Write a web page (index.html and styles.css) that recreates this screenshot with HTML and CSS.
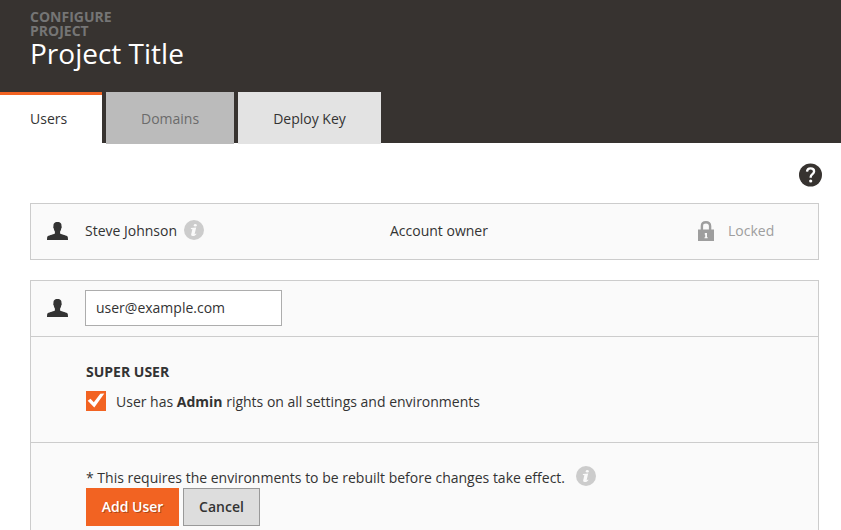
FILE: index.html
```html
<!DOCTYPE html>
<html lang="en">
<head>
<meta charset="utf-8">
<title>Project Title</title>
<link rel="stylesheet" href="styles.css">
</head>
<body>
<svg class="defs" width="0" height="0">
  <symbol id="person" viewBox="0 0 21 18"><path d="M10.500 0C7.300 0 6.300 1.800 6.500 4.300C6 4.700 6.300 6.300 6.800 6.600C7 8 7.400 8.900 7.900 9.600V11.400C6 12.700 1 13 .3 14.800C.1 15.700 0 17.300 0 18H21C21 17.300 20.900 15.700 20.700 14.800C20 13 15 12.700 13.100 11.400V9.600C13.600 8.900 14 8 14.200 6.600C14.700 6.300 15 4.700 14.500 4.300C14.700 1.800 13.700 0 10.500 0Z"/></symbol>
  <symbol id="info" viewBox="0 0 20 20"><circle cx="10" cy="10" r="10"/><g fill="#fafafa"><ellipse cx="11.300" cy="5.200" rx="1.500" ry="1.300"/><path d="M7 8.100L12.200 7.600L10.700 13.700C10.500 14.500 11.200 14.300 12 13.500L12.500 14C11.200 15.700 9.800 16.200 8.600 16.100C7.400 16 7 15.200 7.200 14.300L8.400 9.200L6.800 8.900Z"/></g></symbol>
</svg>
<header class="header">
  <div class="eyebrow">CONFIGURE PROJECT</div>
  <h1 class="title">Project Title</h1>
  <nav class="tabs">
    <a class="tab tab-active">Users</a>
    <a class="tab tab-disabled">Domains</a>
    <a class="tab">Deploy Key</a>
  </nav>
</header>
<main class="main">
  <div class="help">
    <svg width="24" height="24" viewBox="0 0 24 24"><circle cx="12.500" cy="12" r="11.500" fill="#373330"/><path d="M9 8.600C9.200 6.500 10.600 5.400 12.500 5.400C14.600 5.400 16.100 6.500 16.100 8.400C16.100 11.200 12.700 11 12.700 14.100V14.800" fill="none" stroke="#fff" stroke-width="2.300"/><circle cx="12.700" cy="18" r="1.600" fill="#fff"/></svg>
  </div>
  <section class="card member">
    <svg class="person" width="21" height="18"><use href="#person"/></svg>
    <span class="name">Steve Johnson</span>
    <svg class="info" width="20" height="20"><use href="#info"/></svg>
    <span class="role">Account owner</span>
    <svg class="lock" width="16" height="20" viewBox="0 0 16 20"><path d="M3.900 9V5C3.900 2.500 5.500 1.200 8 1.200S12.100 2.500 12.100 5V9" fill="none" stroke="#9e9e9e" stroke-width="2.400"/><path d="M0 8.500H16V20H0Z" fill="#9e9e9e"/><path d="M6.800 12H9V16.200H9.700V17.300H6.500V16.200H7.200V13.800H6.800Z" fill="#fafafa"/></svg>
    <span class="locked">Locked</span>
  </section>
  <section class="card">
    <div class="row email-row">
      <svg class="person" width="21" height="18"><use href="#person"/></svg>
      <input class="email" type="text" value="user@example.com" aria-label="Email">
    </div>
    <div class="row access">
      <h2 class="heading">SUPER USER</h2>
      <div class="option">
        <span class="checkbox"><svg width="20" height="20" viewBox="0 0 20 20"><path d="M1.700 9.700L4.500 7.800L7.800 11.300L14.300 2.700L18.300 2.400L8.300 16.500Z" fill="#fff"/></svg></span>
        <span class="option-text">User has <b>Admin</b> rights on all settings and environments</span>
      </div>
    </div>
    <div class="row footer">
      <div class="note"><span class="note-text">* This requires the environments to be rebuilt before changes take effect.</span><svg class="info" width="20" height="20"><use href="#info"/></svg></div>
      <div class="buttons"><button class="btn primary">Add User</button><button class="btn">Cancel</button></div>
    </div>
  </section>
</main>
</body>
</html>
```
FILE: styles.css
```css
* { box-sizing: border-box; }
html { overflow: hidden; }
body { margin: 0; height: 530px; overflow: hidden; background: #fff; color: #333; font: 14px/20px "Open Sans", sans-serif; }
.defs { display: block; }
.header { display: flex; flex-direction: column; height: 143px; padding-top: 10px; background: #373330; }
.eyebrow { width: 100px; margin-left: 30px; color: #757575; font-weight: 700; font-size: 14px; line-height: 14px; }
.title { height: 30px; margin: 0 0 24px 30px; color: #fff; font-size: 28px; font-weight: 400; line-height: 30px; }
.tabs { display: flex; gap: 4px; height: 52px; }
.tab { display: block; height: 52px; padding: 17px 35px 0; background: #e3e3e3; }
.tab-active { width: 102px; padding: 14px 0 0 30px; border-top: 3px solid #f26322; background: #fff; }
.tab-disabled { background: #bbb; color: #6b6b6b; }
.main { padding: 20px 22px 0 30px; }
.help { display: flex; justify-content: flex-end; height: 40px; margin-right: -3px; }
.card { width: 789px; border: 1px solid #ccc; background: #fafafa; }
.member { display: flex; align-items: center; height: 57px; padding-bottom: 2px; margin-bottom: 20px; }
.person { flex: none; margin: 0 17px 0 16px; fill: #333; }
.name { width: 99px; white-space: nowrap; }
.info { flex: none; fill: #ccc; }
.role { width: 308px; margin-left: 186px; }
.member .info { margin-bottom: 2px; }
.lock { flex: none; margin-right: 14px; }
.locked { color: #9e9e9e; }
.row + .row { border-top: 1px solid #ccc; }
.email-row { display: flex; align-items: center; height: 55px; padding-bottom: 2px; }
.email { width: 197px; height: 36px; padding: 0 10px; border: 1px solid #adadad; background: #fff; color: #333; font: inherit; }
.access { height: 106px; padding: 25px 0 0 55px; }
.heading { margin: 0 0 9px; font-size: 14px; font-weight: 700; line-height: 20px; }
.option { display: flex; align-items: flex-start; gap: 10px; }
.option-text { padding-top: 1px; }
.checkbox { display: block; width: 20px; height: 20px; background: #f26322; }
.checkbox svg { display: block; }
.footer { height: 110px; padding: 23px 0 0 55px; }
.note { display: flex; align-items: flex-start; gap: 10.500px; height: 22px; }
.note-text { padding-top: 2px; }
.buttons { display: flex; gap: 4px; }
.btn { width: 77px; height: 38px; padding: 0; border: 1px solid #999; background: #ddd; color: #333; font: 600 14px/20px "Open Sans", sans-serif; }
.primary { width: 93px; border-color: #f26322; background: #f26322; color: #fff; text-shadow: 1px 1px 0 rgba(0,0,0,.3); }
```
